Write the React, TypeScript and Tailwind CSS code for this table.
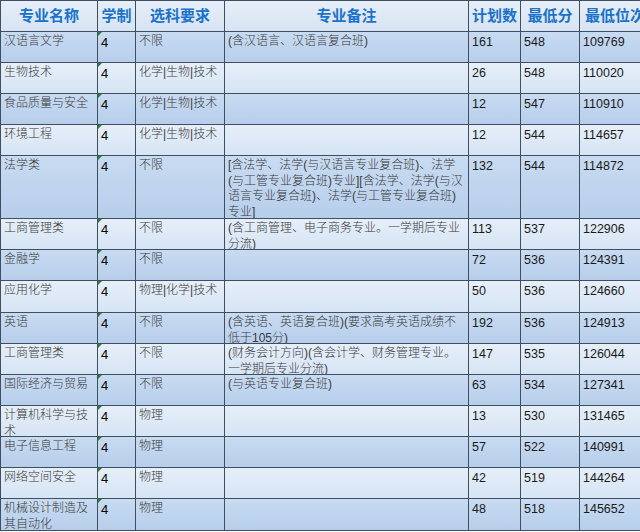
const rows = [
  { name: "汉语言文学", req: "不限", note: "(含汉语言、汉语言复合班)", plan: "161", score: "548", rank: "109769" },
  { name: "生物技术", req: "化学|生物|技术", note: "", plan: "26", score: "548", rank: "110020" },
  { name: "食品质量与安全", req: "化学|生物|技术", note: "", plan: "12", score: "547", rank: "110910" },
  { name: "环境工程", req: "化学|生物|技术", note: "", plan: "12", score: "544", rank: "114657" },
  {
    name: "法学类",
    req: "不限",
    note: "[含法学、法学(与汉语言专业复合班)、法学(与工管专业复合班)专业][含法学、法学(与汉语言专业复合班)、法学(与工管专业复合班)专业]",
    plan: "132",
    score: "544",
    rank: "114872",
    tall: true,
  },
  { name: "工商管理类", req: "不限", note: "(含工商管理、电子商务专业。一学期后专业分流)", plan: "113", score: "537", rank: "122906" },
  { name: "金融学", req: "不限", note: "", plan: "72", score: "536", rank: "124391" },
  { name: "应用化学", req: "物理|化学|技术", note: "", plan: "50", score: "536", rank: "124660", extra: true },
  { name: "英语", req: "不限", note: "(含英语、英语复合班)(要求高考英语成绩不低于105分)", plan: "192", score: "536", rank: "124913" },
  { name: "工商管理类", req: "不限", note: "(财务会计方向)(含会计学、财务管理专业。一学期后专业分流)", plan: "147", score: "535", rank: "126044" },
  { name: "国际经济与贸易", req: "不限", note: "(与英语专业复合班)", plan: "63", score: "534", rank: "127341" },
  { name: "计算机科学与技术", req: "物理", note: "", plan: "13", score: "530", rank: "131465" },
  { name: "电子信息工程", req: "物理", note: "", plan: "57", score: "522", rank: "140991" },
  { name: "网络空间安全", req: "物理", note: "", plan: "42", score: "519", rank: "144264" },
  { name: "机械设计制造及其自动化", req: "物理", note: "", plan: "48", score: "518", rank: "145652", extra: true },
];

const headers = ["专业名称", "学制", "选科要求", "专业备注", "计划数", "最低分", "最低位次"];

const cjk = "font-['Liberation_Sans','Noto_Sans_CJK_SC',sans-serif]";

export default function App() {
  return (
    <div className="w-[640px] h-[532px] overflow-hidden bg-white">
      <div className="w-[650px] border-t border-l border-[#3f4f62]">
        {/* Header */}
        <div className="grid grid-cols-[97px_38px_89px_244px_52px_59px_71px] h-[31px]">
          {headers.map((h) => (
            <div
              key={h}
              className={`flex items-center justify-center whitespace-nowrap border-r border-b border-[#3f4f62] bg-linear-to-b from-[#e6eef8] to-[#d7e4f3] text-[15px] font-bold text-[#1a72cc] ${cjk}`}
            >
              {h}
            </div>
          ))}
        </div>

        {/* Body */}
        {rows.map((r, i) => {
          const dark = i % 2 === 0;
          const bg = dark
            ? "bg-linear-to-b from-[#c8dbf1] to-[#b7ceeb]"
            : "bg-linear-to-b from-[#e6eff9] to-[#d6e4f4]";
          const height = r.tall ? "h-[63px]" : r.extra ? "h-[32px]" : "h-[31px]";
          const cell = `overflow-hidden border-r border-b border-[#3f4f62] ${bg}`;
          const textCell = `${cell} pl-[3px] pr-[4px] pt-[2px] text-[12px] leading-[15.5px] font-light text-[#3a3a3a] ${cjk}`;
          const numCell = `${cell} pl-[3px] pt-[3px] text-[12.5px] leading-[15px] text-[#1a1a1a] font-['Liberation_Sans',sans-serif]`;
          return (
            <div
              key={i}
              className={`grid grid-cols-[97px_38px_89px_244px_52px_59px_71px] ${height}`}
            >
              <div className={textCell}>{r.name}</div>
              <div className={`${numCell} relative pl-[2px] text-[13px] text-black`}>
                <span className="absolute left-0 top-0 w-0 h-0 border-t-[4px] border-r-[4px] border-t-[#2f7d3a] border-r-transparent" />
                4
              </div>
              <div className={textCell}>{r.req}</div>
              <div className={textCell}>{r.note}</div>
              <div className={numCell}>{r.plan}</div>
              <div className={numCell}>{r.score}</div>
              <div className={numCell}>{r.rank}</div>
            </div>
          );
        })}
      </div>
    </div>
  );
}
